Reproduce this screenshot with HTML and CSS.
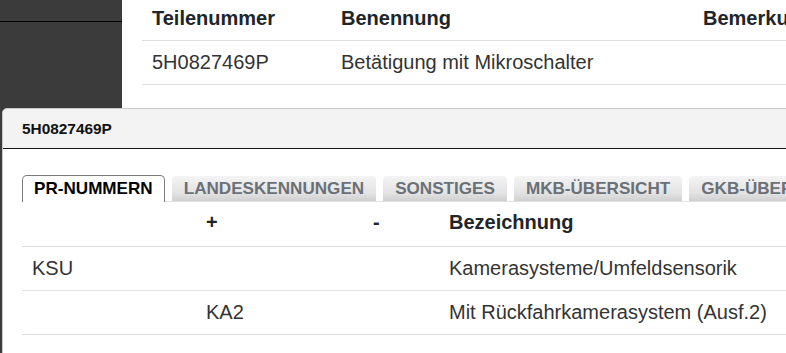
FILE: index.html
```html
<!DOCTYPE html>
<html lang="de">
<head>
<meta charset="utf-8">
<title>Teile</title>
<link rel="stylesheet" href="styles.css">
</head>
<body>
<aside class="sidebar">
  <div class="sidebar-top"></div>
</aside>
<main class="content">
  <table class="parts">
    <colgroup><col class="c1"><col class="c2"><col class="c3"></colgroup>
    <thead>
      <tr><th>Teilenummer</th><th>Benennung</th><th>Bemerkung</th></tr>
    </thead>
    <tbody>
      <tr><td>5H0827469P</td><td>Betätigung mit Mikroschalter</td><td></td></tr>
    </tbody>
  </table>
</main>

<div class="dialog">
  <div class="dialog-header">5H0827469P</div>
  <div class="dialog-body">
    <div class="tabs">
      <div class="tab active">PR-NUMMERN</div>
      <div class="tab">LANDESKENNUNGEN</div>
      <div class="tab">SONSTIGES</div>
      <div class="tab">MKB-ÜBERSICHT</div>
      <div class="tab">GKB-ÜBERSICHT</div>
    </div>
    <table class="pr">
      <colgroup><col class="p1"><col class="p2"><col class="p3"><col class="p4"></colgroup>
      <thead>
        <tr><th></th><th>+</th><th>-</th><th>Bezeichnung</th></tr>
      </thead>
      <tbody>
        <tr><td>KSU</td><td></td><td></td><td>Kamerasysteme/Umfeldsensorik</td></tr>
        <tr><td></td><td>KA2</td><td></td><td>Mit Rückfahrkamerasystem (Ausf.2)</td></tr>
      </tbody>
    </table>
  </div>
</div>
</body>
</html>
```

FILE: styles.css
```css
html, body {
  margin: 0;
  padding: 0;
  height: 100%;
  overflow: hidden;
}
body {
  display: flex;
  font-family: "Liberation Sans", Arial, sans-serif;
  color: #212529;
  background: #fff;
}
.sidebar {
  width: 122px;
  flex: 0 0 122px;
  background: #3b3b3b;
}
.sidebar-top {
  height: 21px;
  border-bottom: 1px solid #000;
}
.content {
  flex: 1;
  padding-left: 20px;
  overflow: hidden;
}
table {
  border-collapse: collapse;
  table-layout: fixed;
}
.parts {
  width: 760px;
  font-size: 20px;
}
.parts col.c1 { width: 189px; }
.parts col.c2 { width: 362px; }
.parts col.c3 { width: 209px; }
.parts th {
  text-align: left;
  font-weight: bold;
  height: 40px;
  padding: 0 10px 3px;
  box-sizing: border-box;
  white-space: nowrap;
  overflow: hidden;
  border-bottom: 1px solid #dcdfe3;
}
.parts td {
  height: 44px;
  padding: 0 10px;
  box-sizing: border-box;
  color: #333;
  border-bottom: 1px solid #dcdfe3;
}

.dialog {
  position: absolute;
  left: 2px;
  top: 108px;
  width: 840px;
  height: 300px;
  background: #fff;
  border: 1px solid #c8c8c8;
  border-radius: 5px;
}
.dialog-header {
  height: 39px;
  background: #f3f3f3;
  border-bottom: 1px solid #111;
  border-radius: 5px 5px 0 0;
  padding-left: 19px;
  display: flex;
  align-items: center;
  font-size: 15.4px;
  font-weight: bold;
  color: #111;
}
.dialog-body {
  padding: 26px 0 0 19px;
}
.tabs {
  display: flex;
  align-items: flex-end;
  gap: 7px;
  height: 26px;
  border-bottom: 1px solid #e2e2e2;
  white-space: nowrap;
}
.tab {
  height: 25px;
  box-sizing: border-box;
  padding: 0 12px;
  display: flex;
  align-items: center;
  font-size: 17.1px;
  font-weight: bold;
  color: #6a7077;
  background: linear-gradient(#f4f4f4, #e2e2e2 70%, #cfcfcf);
  border-radius: 4px 4px 0 0;
}
.tab.active {
  height: 27px;
  padding: 0 11px;
  color: #000;
  background: #fff;
  border: 1px solid #7a7a7a;
  border-bottom: none;
  border-radius: 5px 5px 0 0;
  margin-bottom: -1px;
}
.pr {
  width: 820px;
  font-size: 20px;
}
.pr col.p1 { width: 174px; }
.pr col.p2 { width: 167px; }
.pr col.p3 { width: 76px; }
.pr col.p4 { width: 403px; }
.pr th {
  text-align: left;
  font-weight: bold;
  height: 44px;
  padding: 0 10px 2px;
  box-sizing: border-box;
  border-bottom: 1px solid #dcdfe3;
}
.pr td {
  height: 44px;
  padding: 0 10px;
  box-sizing: border-box;
  color: #333;
  border-bottom: 1px solid #dcdfe3;
  white-space: nowrap;
}
```
